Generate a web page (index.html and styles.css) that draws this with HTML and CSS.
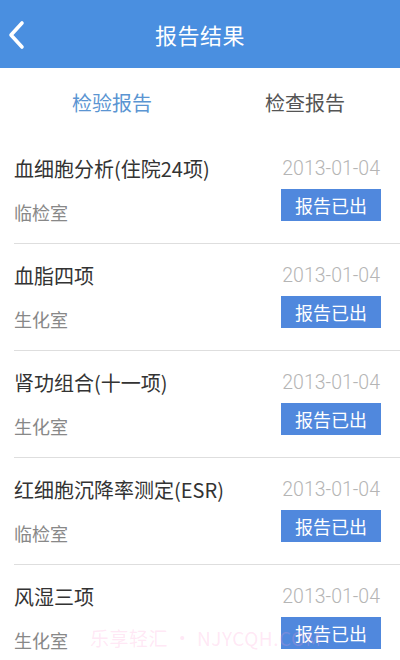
FILE: index.html
```html
<!doctype html>
<html lang="zh-CN">
<head>
<meta charset="UTF-8">
<title>报告结果</title>
<meta name="viewport" content="width=device-width, initial-scale=1.0">
<link rel="stylesheet" href="styles.css">
</head>
<body>
<header class="bar">
  <svg class="back" width="20" height="32" viewBox="0 0 20 32"><polyline points="15,4 4,16 15,28" fill="none" stroke="#fff" stroke-width="3.6" stroke-linecap="round" stroke-linejoin="round"/></svg>
  <h1>报告结果</h1>
</header>

<nav class="tabs">
  <span class="tab active">检验报告</span>
  <span class="tab">检查报告</span>
</nav>

<ul class="list">
  <li class="row">
    <div class="info"><div class="name">血细胞分析(住院24项)</div><div class="dept">临检室</div></div>
    <div class="side"><div class="date">2013-01-04</div><span class="state">报告已出</span></div>
  </li>
  <li class="row">
    <div class="info"><div class="name">血脂四项</div><div class="dept">生化室</div></div>
    <div class="side"><div class="date">2013-01-04</div><span class="state">报告已出</span></div>
  </li>
  <li class="row">
    <div class="info"><div class="name">肾功组合(十一项)</div><div class="dept">生化室</div></div>
    <div class="side"><div class="date">2013-01-04</div><span class="state">报告已出</span></div>
  </li>
  <li class="row">
    <div class="info"><div class="name">红细胞沉降率测定(ESR)</div><div class="dept">临检室</div></div>
    <div class="side"><div class="date">2013-01-04</div><span class="state">报告已出</span></div>
  </li>
  <li class="row">
    <div class="info"><div class="name">风湿三项</div><div class="dept">生化室</div></div>
    <div class="side"><div class="date">2013-01-04</div><span class="state">报告已出</span></div>
  </li>
</ul>

<div class="mark">乐享轻汇 • NJYCQH.COM</div>
</body>
</html>
```

FILE: styles.css
```css
html, body {
  height: 100%;
}
body {
  margin: 0;
  font-family: "Noto Sans CJK SC", "Noto Sans", sans-serif;
  background: #fff;
  overflow: hidden;
  position: relative;
}
.bar {
  height: 68px;
  background: #4a8fe0;
  display: flex;
  align-items: center;
  justify-content: center;
  position: relative;
}
.back {
  position: absolute;
  left: 7px;
  top: 19px;
}
.bar h1 {
  margin: 0;
  color: #fff;
  font-size: 22px;
  font-weight: normal;
  letter-spacing: 0.5px;
}
.tabs {
  height: 69px;
  display: flex;
}
.tab {
  width: 200px;
  box-sizing: border-box;
  display: flex;
  align-items: center;
  justify-content: center;
  font-size: 20px;
  color: #555;
  padding: 0 0 0 10px;
}
.tab.active {
  color: #5b95d2;
  padding-left: 24px;
}
.list {
  list-style: none;
  margin: 0;
  padding: 0;
}
.row {
  height: 106px;
  margin-left: 14px;
  padding-right: 19px;
  border-bottom: 1px solid #dedede;
  display: flex;
  justify-content: space-between;
}
.info {
  padding-top: 19px;
}
.name {
  font-size: 20px;
  line-height: 26px;
  color: #333;
}
.dept {
  margin-top: 17px;
  font-size: 18px;
  line-height: 26px;
  color: #888;
}
.side {
  padding-top: 21px;
  display: flex;
  flex-direction: column;
  align-items: flex-end;
}
.date {
  font-family: Roboto, "Liberation Sans", sans-serif;
  font-weight: 300;
  font-size: 19.5px;
  line-height: 22px;
  color: #b5b5b5;
  margin-right: 1px;
}
.state {
  margin-top: 9px;
  width: 100px;
  height: 32px;
  line-height: 32px;
  text-align: center;
  background: #5088dd;
  color: #fff;
  font-size: 18px;
}
.mark {
  position: absolute;
  left: 90px;
  top: 624px;
  font-size: 19px;
  color: rgba(255, 150, 210, 0.22);
  letter-spacing: 0.5px;
}
```
